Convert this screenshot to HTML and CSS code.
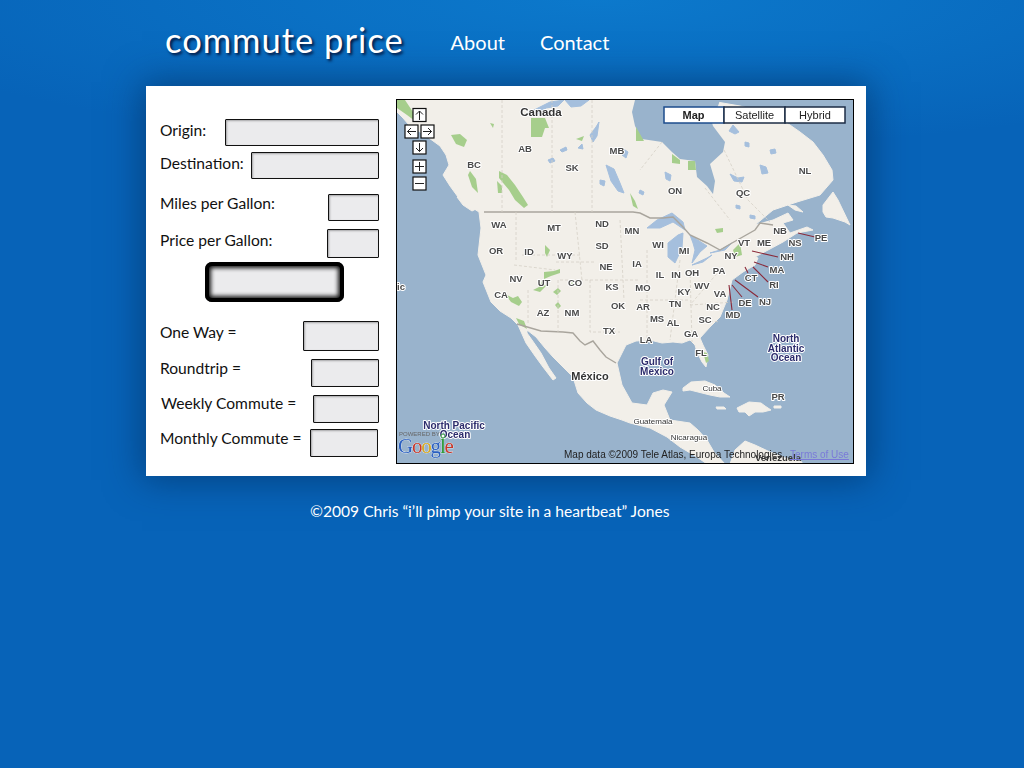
FILE: index.html
```html
<!DOCTYPE html>
<html lang="en">
<head>
<meta charset="utf-8">
<title>commute price</title>
<link rel="stylesheet" href="styles.css">
</head>
<body>
<div class="page">
  <header class="header">
    <h1 class="logo">commute price</h1>
    <nav class="nav"><a>About</a><a>Contact</a></nav>
  </header>
  <main class="card">
    <form class="form">
      <div class="row r-origin"><label>Origin:</label><span class="box w-origin"></span></div>
      <div class="row r-dest"><label>Destination:</label><span class="box w-dest"></span></div>
      <div class="row r-miles"><label class="up">Miles per Gallon:</label><span class="box w-miles"></span></div>
      <div class="row r-price"><label>Price per Gallon:</label><span class="box w-price"></span></div>
      <div class="go"></div>
      <div class="row r-one"><label>One Way =</label><span class="box w-one"></span></div>
      <div class="row r-round"><label class="up">Roundtrip =</label><span class="box w-round"></span></div>
      <div class="row r-week"><label class="up nudge">Weekly Commute =</label><span class="box w-week"></span></div>
      <div class="row r-month"><label class="up">Monthly Commute =</label><span class="box w-month"></span></div>
    </form>
    <div class="map">
      <svg class="mapsvg" viewBox="397 100 456 363" width="456" height="363" xmlns="http://www.w3.org/2000/svg">
        <rect class="sea" x="397" y="100" width="456" height="363"/>
        <!-- mainland -->
        <path class="land" d="M397 112 L403 118 409 125 420 132 429 138 440 146 446 155 449 165 443 175 450 186 458 197 468 205 479 212 481 228 478 255 486 275 483 282 491 302 500 311 511 318 518 325 526 343 535 356 543 367 553 380 556 378 549 368 541 353 532 340 527 333 527 330 536 337 545 348 553 357 563 367 573 377 578 393 587 403 596 410 610 416 622 420 630 423 650 428 667 437 680 447 697 457 707 464 725 464 714 452 707 440 698 430 690 423 670 420 664 405 672 392 663 390 653 393 647 405 632 403 622 385 617 363 626 345 636 341 650 340 662 343 673 342 682 343 690 340 695 345 697 352 702 362 706 367 708 355 703 345 700 338 710 327 720 317 727 300 732 280 743 272 755 265 758 258 755 257 783 242 797 233 813 230 807 227 790 233 783 223 793 220 788 213 773 220 755 225 773 210 797 202 820 195 833 180 832 170 823 155 813 142 800 132 790 125 775 117 763 112 740 106 717 102 712 100 397 100Z"/>
        <!-- Hudson Bay -->
        <path class="sea" d="M635 100 L632 112 635 126 642 139 662 142 672 152 680 159 695 161 697 177 707 186 713 194 715 181 710 164 723 152 725 142 713 126 710 116 718 106 720 100Z"/>
        <!-- islands -->
        <path class="land" d="M823 205 L833 192 838 200 850 225 845 222 833 218 826 217 823 212Z"/>
        <path class="land" d="M788 205 l8 1 7 6 -8 -2z"/>
        <path class="land" d="M683 388 l8 -6 14 -1 10 4 9 8 6 4 -10 0 -10 -2 -12 -3 -8 -2 -7 1z"/>
        <path class="land" d="M737 408 l12 -6 12 1 4 3 6 4 -8 2 -8 0 -6 4 -4 -4 -6 0z"/>
        <path class="land" d="M716 407 h8 l2 2 h-9z"/>
        <path class="land" d="M774 406 h7 v2 h-7z"/>
        <path class="land" d="M730 464 L735 450 745 441 755 445 770 452 785 458 800 460 803 464Z"/>
        <path class="land" d="M457 178 l8 5 6 12 -4 0 -8 -8z"/>
        <path class="land" d="M457 197 l12 5 9 6 -6 3 -9 -6z"/>
        <!-- big lakes -->
        <g class="lake">
          <path d="M647 228 L657 220 672 213 683 222 685 230 673 222 660 228Z"/>
          <path d="M668 257 L668 243 678 235 683 233 682 248 675 263Z"/>
          <path d="M690 235 L707 246 700 252 692 263 695 250 693 243Z"/>
          <path d="M692 265 L707 258 712 255 703 262Z"/>
          <path d="M710 253 L720 250 732 243 725 250Z"/>
          <path d="M606 165 l8 4 6 14 4 10 -6 -2 -7 -10z"/>
          <path d="M590 135 l6 -8 3 -5 -2 14 -4 6z"/>
          <path d="M526 114 l16 -8 8 -4 14 -2 -6 6 -12 2 -8 6z"/>
          <path d="M565 100 h24 l-8 6 -10 1z"/>
          <path d="M730 174 l8 4 6 -1 -2 5 -8 -1z"/>
          <path d="M760 165 l6 2 2 6 -6 1z"/>
          <path d="M733 125 l-4 6 6 3 4 -2z"/>
          <path d="M622 148 l6 4 -2 6 -4 -3z"/>
          <path d="M665 172 l6 3 -1 6 -4 -2z"/>
          <path d="M548 160 l5 -2 2 3 -5 2z"/>
          <path d="M560 150 l6 -3 1 3 -5 2z"/>
          <path d="M578 148 l4 -4 1 5z"/>
          <path d="M600 180 l5 1 -1 5 -4 -2z"/>
          <path d="M640 190 l4 2 -1 3 -4 -2z"/>
          <path d="M745 142 l4 1 0 4 -4 -1z"/>
          <path d="M770 150 l5 -1 1 4 -5 1z"/>
          <path d="M750 215 l5 1 0 3 -5 -1z"/>
          <path d="M736 205 l4 1 0 3 -4 -1z"/>
        </g>
        <!-- green areas -->
        <g class="park">
          <path d="M531 118 h14 l4 10 -4 0 -3 9 -11 0z"/>
          <path d="M397 100 h8 l8 12 8 8 -6 1 -8 -6 -10 -7z"/>
          <path d="M451 135 l9 -1 7 6 -3 7 -8 -3z"/>
          <path d="M470 171 l6 8 2 14 -6 -6 -4 -12z"/>
          <path d="M499 171 l8 4 8 10 8 12 5 8 -4 3 -9 -8 -6 -10 -10 -12z"/>
          <path d="M497 181 l5 5 0 7 -4 0z"/>
          <path d="M545 245 l5 5 -3 7 -2 -4z"/>
          <path d="M544 272 l10 -1 6 -2 0 4 -9 3 -7 3z"/>
          <path d="M636 127 l8 14 -8 0z"/>
          <path d="M672 154 l8 6 0 4 -8 -1z"/>
          <path d="M688 161 l7 0 1 9 -8 0z"/>
          <path d="M630 193 l5 8 3 8 -5 -3z"/>
          <path d="M733 250 l7 -7 2 12 -7 2z"/>
          <path d="M516 318 l8 3 3 8 -8 -5z"/>
          <path d="M533 290 l6 -3 3 -6 4 5 -6 6z"/>
          <path d="M555 305 l3 -3 3 4 -3 3z"/>
          <path d="M703 352 l4 1 2 8 -3 2z"/>
          <path d="M553 292 l5 -4 3 3 -4 4z"/>
          <path d="M505 294 l6 8 8 4 3 -4 -4 -6 -5 2z"/>
          <path d="M715 229 l8 -1 0 4 -6 1z"/>
          <path d="M576 139 l8 -3 -2 5z"/>
          <path d="M490 123 l4 1 -1 4z"/>
          <path d="M571 283 l4 -2 -1 5z"/>
        </g>
        <!-- borders -->
        <path class="border" d="M484 212 H633 L640 213 650 218 663 218 673 217 683 227 690 235 707 243 720 250 732 243 755 230 760 223 773 225"/>
        <path class="border" d="M517 324 L541 331 563 332 573 333 580 341 585 345 593 341 600 350 606 357 616 363"/>
        <path class="prov" d="M502 100 V212 M552 100 V212 M592 100 V212 M662 142 L640 170 M705 188 L730 220 M724 150 L748 200 770 222"/>
        <path class="prov" d="M516 212 V262 M575 212 L582 280 M556 262 H594 M522 255 L580 255 M514 265 L555 270 M560 280 H640 M620 220 L624 300 M528 290 V325 M558 280 V332 M590 280 L590 332 L620 332 M647 250 V340 M680 260 L670 340 M690 270 L692 342 M640 300 H690 M720 270 L690 305 M690 305 L735 302 M700 320 L720 322"/>
        <!-- callout lines -->
        <path class="callout" d="M798 233 L815 237 M752 251 L778 257 M754 262 L768 267 M753 267 L768 282 M745 267 L748 273 M735 280 L758 297 M732 285 L742 297 M729 285 L732 310"/>
        <!-- labels -->
        <g class="lbl">
          <text x="541" y="116" class="big">Canada</text>
          <text x="525" y="152">AB</text><text x="474" y="168">BC</text><text x="572" y="171">SK</text><text x="617" y="154">MB</text>
          <text x="675" y="194">ON</text><text x="743" y="196">QC</text><text x="805" y="174">NL</text>
          <text x="499" y="228">WA</text><text x="554" y="231">MT</text><text x="602" y="227">ND</text><text x="632" y="234">MN</text>
          <text x="496" y="254">OR</text><text x="529" y="255">ID</text><text x="565" y="259">WY</text><text x="602" y="249">SD</text><text x="606" y="270">NE</text>
          <text x="516" y="282">NV</text><text x="544" y="286">UT</text><text x="575" y="286">CO</text><text x="612" y="290">KS</text><text x="643" y="291">MO</text>
          <text x="501" y="298">CA</text><text x="543" y="316">AZ</text><text x="572" y="316">NM</text><text x="618" y="309">OK</text><text x="609" y="334">TX</text>
          <text x="658" y="248">WI</text><text x="684" y="254">MI</text><text x="637" y="267">IA</text><text x="660" y="278">IL</text><text x="676" y="278">IN</text><text x="692" y="276">OH</text>
          <text x="731" y="259">NY</text><text x="744" y="246">VT</text><text x="764" y="246">ME</text><text x="780" y="234">NB</text><text x="795" y="246">NS</text><text x="821" y="241">PE</text>
          <text x="787" y="260">NH</text><text x="777" y="273">MA</text><text x="774" y="288">RI</text><text x="751" y="281">CT</text><text x="719" y="274">PA</text>
          <text x="702" y="289">WV</text><text x="720" y="297">VA</text><text x="713" y="310">NC</text><text x="745" y="306">DE</text><text x="765" y="305">NJ</text><text x="733" y="318">MD</text>
          <text x="684" y="295">KY</text><text x="675" y="307">TN</text><text x="643" y="310">AR</text><text x="657" y="322">MS</text><text x="673" y="326">AL</text><text x="705" y="323">SC</text>
          <text x="691" y="337">GA</text><text x="701" y="356">FL</text><text x="646" y="343">LA</text><text x="778" y="400">PR</text>
          <text x="590" y="380" class="mid">México</text>
          <text x="712" y="391" class="small">Cuba</text><text x="653" y="424" class="small">Guatemala</text><text x="689" y="440" class="small">Nicaragua</text>
          <text x="397" y="290" class="tiny">ic</text>
          <text class="water" x="657" y="365">Gulf of</text><text class="water" x="657" y="375">Mexico</text>
          <text class="water" x="786" y="342">North</text><text class="water" x="786" y="352">Atlantic</text><text class="water" x="786" y="361">Ocean</text>
          <text class="water" x="454" y="429">North Pacific</text><text class="water" x="455" y="438">Ocean</text>
        </g>
        <!-- attribution -->
        <text class="attr" x="564" y="458">Map data ©2009 Tele Atlas, Europa Technologies</text>
        <text class="venez" x="755" y="461">Venezuela</text>
        <text class="terms" x="790" y="458">Terms of Use</text>
        <path class="pin" d="M443 437 V452"/><circle class="pinhead" cx="443" cy="436" r="2"/>
        <text class="powered" x="399" y="436">POWERED BY</text>
        <text class="goog" x="398" y="453"><tspan fill="#2a5fc0">G</tspan><tspan fill="#c8382a">o</tspan><tspan fill="#d8a820">o</tspan><tspan fill="#2a5fc0">g</tspan><tspan fill="#2f9a3a">l</tspan><tspan fill="#c8382a">e</tspan></text>
        <!-- nav controls -->
        <g class="ctl">
          <rect x="413" y="108.500" width="13" height="13"/><path d="M419.5 120 V111 M416 114.500 L419.5 111 423 114.500"/>
          <rect x="405" y="125" width="13" height="13"/><path d="M416 131.500 H407.500 M411 128 L407.500 131.500 411 135"/>
          <rect x="421" y="125" width="13" height="13"/><path d="M423 131.500 H431.500 M428 128 L431.500 131.500 428 135"/>
          <rect x="413" y="141" width="13" height="13"/><path d="M419.500 143 V151.500 M416 148 L419.500 151.500 423 148"/>
          <rect x="413" y="160" width="13" height="13"/><path d="M415 166.500 H424 M419.500 162 V171"/>
          <rect x="413" y="177" width="13" height="13"/><path d="M415 183.500 H424"/>
        </g>
        <!-- map type -->
        <g class="types">
          <rect class="t-on" x="664" y="107" width="60" height="16"/>
          <rect x="724" y="107" width="61" height="16"/>
          <rect x="785" y="107" width="60" height="16"/>
          <text class="t-b" x="693.500" y="119">Map</text>
          <text x="754.500" y="119">Satellite</text>
          <text x="815" y="119">Hybrid</text>
        </g>
      </svg>
    </div>
  </main>
  <footer class="foot">©2009 Chris “i’ll pimp your site in a heartbeat” Jones</footer>
</div>
</body>
</html>
```
FILE: styles.css
```css
* { box-sizing: border-box; }
html, body { margin: 0; height: 100%; }
body {
  background:
    radial-gradient(ellipse 760px 150px at 600px 0, rgba(14,130,212,.7) 0, rgba(14,130,212,0) 100%),
    #0763b8;
  font-family: Lato, "Open Sans", sans-serif;
  overflow: hidden;
}
.page { width: 1024px; height: 768px; padding-left: 146px; }
.header { height: 86px; display: flex; align-items: flex-start; padding-left: 19px; }
.logo {
  margin: 18px 0 0;
  font: 400 34.500px/44px Lato, sans-serif;
  letter-spacing: 1px;
  color: #fff;
  text-shadow: 2px 2px 3px rgba(0,0,30,.85);
}
.nav { display: flex; gap: 35px; margin: 27px 0 0 47px; }
.nav a { color: #fff; font-size: 20px; line-height: 30px; }
.card {
  width: 720px; height: 390px; background: #fff;
  display: flex;
  box-shadow: 0 0 34px 4px rgba(3,40,84,.55);
}
.form { width: 250px; padding: 33px 17px 0 14px; color: #111; }
.row { display: flex; justify-content: space-between; align-items: flex-start; font-size: 15.600px; line-height: 22px; }
.row label { display: block; white-space: nowrap; }
.row .up { margin-top: -2px; }
.box {
  display: block; flex: none; height: 27px;
  background: #ebebed; border: 1px solid #111; border-radius: 1px;
  box-shadow: inset 1px 1px 2px rgba(0,0,0,.3);
}
.nudge { margin-left: 1px; }
.r-dest { margin-top: 6px; }
.r-miles { margin-top: 15px; }
.r-price { margin-top: 8px; }
.r-one { margin-top: 19px; }
.r-round { margin-top: 8px; }
.r-week { margin-top: 8px; }
.r-week .up { margin-top: -3px; }
.r-month { margin-top: 6px; padding-right: 1px; }
.w-origin { width: 154px; }
.w-dest { width: 128px; }
.w-miles { width: 51px; }
.w-price { width: 52px; height: 29px; }
.w-one { width: 76px; height: 30px; }
.w-round { width: 68px; height: 28px; }
.w-week { width: 66px; height: 28px; }
.w-month { width: 68px; height: 28px; }
.go {
  width: 139px; height: 40px; margin: 4px 0 0 45px;
  border-radius: 7px; background: #ebebed;
  box-shadow: inset 0 0 0 4px #000, inset 0 0 4px 6px rgba(0,0,0,.9);
}
.map { margin: 13px 0 0; width: 458px; height: 365px; border: 1px solid #000; }
.mapsvg { display: block; filter: blur(.35px); }
.sea { fill: #99b3cc; }
.land { fill: #f2efe9; stroke: #f2efe9; stroke-width: 1; stroke-linejoin: round; }
.lake path { fill: #a5bfdd; stroke: #a5bfdd; stroke-width: 1; stroke-linejoin: round; }
.park path { fill: #a6ce8c; }
.border { fill: none; stroke: #a9a59d; stroke-width: 1.4; }
.prov { fill: none; stroke: #d6d1c6; stroke-width: .8; stroke-dasharray: 3 2; }
.callout { fill: none; stroke: #8a2a3a; stroke-width: 1.1; }
.lbl text {
  font: 700 9.500px "Liberation Sans", sans-serif;
  fill: #4a4a4a; text-anchor: middle;
  stroke: #fff; stroke-width: 2px; paint-order: stroke; stroke-linejoin: round;
}
.lbl .big { font-size: 11.500px; fill: #333; }
.lbl .mid { font-size: 11px; fill: #333; }
.lbl .small { font-size: 8px; font-weight: 400; fill: #333; }
.lbl .tiny { text-anchor: start; }
.lbl .water { font-size: 10px; fill: #2c2c6c; }
.attr { font: 400 10px "Liberation Sans", sans-serif; fill: #222; }
.venez { font: 700 9.500px "Liberation Sans", sans-serif; fill: #333; }
.terms { font: 400 10px "Liberation Sans", sans-serif; fill: #7a7ad8; text-decoration: underline; }
.powered { font: 400 6px "Liberation Sans", sans-serif; fill: #666; }
.goog { font: 400 21px "Liberation Serif", serif; letter-spacing: -1.200px; stroke: #fff; stroke-width: .5px; paint-order: stroke; }
.pin { stroke: #2f9a3a; stroke-width: 1.2; fill: none; }
.pinhead { fill: #fff; stroke: #2f9a3a; stroke-width: 1; }
.ctl rect { fill: #fff; stroke: #111; stroke-width: 1.2; }
.ctl path { fill: none; stroke: #222; stroke-width: 1; }
.types rect { fill: #fff; stroke: #1c2c44; stroke-width: 1.5; }
.types .t-on { stroke: #1c4c8c; }
.types text { font: 400 11px "Liberation Sans", sans-serif; fill: #222; text-anchor: middle; }
.types .t-b { font-weight: 700; }
.foot { color: #fff; font-size: 15.600px; line-height: 20px; margin: 25px 0 0 164px; }
```
